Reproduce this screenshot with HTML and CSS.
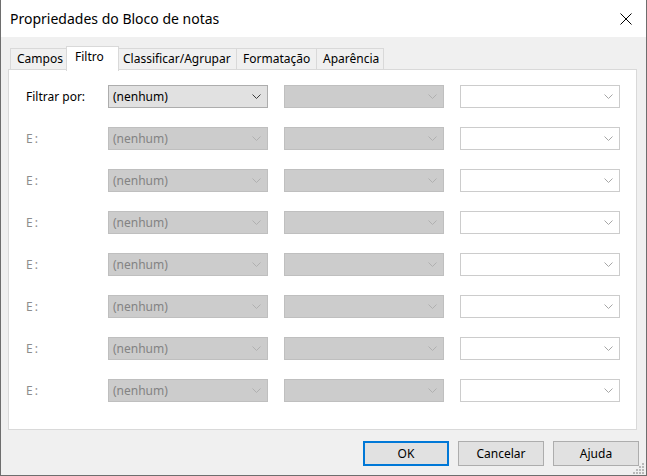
FILE: index.html
```html
<!DOCTYPE html>
<html lang="pt">
<head>
<meta charset="utf-8">
<title>Propriedades do Bloco de notas</title>
<link rel="stylesheet" href="styles.css">
</head>
<body>
<div class="window">
  <div class="titlebar">
    <span class="title">Propriedades do Bloco de notas</span>
    <span class="close">
      <svg width="12" height="12" viewBox="0 0 12 12"><path d="M0.5 0.5 L11.5 11.5 M11.5 0.5 L0.5 11.5" stroke="#000" stroke-width="1" fill="none"/></svg>
    </span>
  </div>
  <div class="client">
    <div class="tabs">
      <div class="tab tab-campos">Campos</div>
      <div class="tab selected tab-filtro">Filtro</div>
      <div class="tab tab-classificar">Classificar/Agrupar</div>
      <div class="tab tab-formatacao">Formatação</div>
      <div class="tab last tab-aparencia">Aparência</div>
    </div>
    <div class="panel">
      <div class="row">
        <span class="label">Filtrar por:</span>
        <div class="combo active"><span class="val">(nenhum)</span><svg class="chev" width="9" height="5" viewBox="0 0 9 5"><path d="M0.5 0.5 L4.5 4.5 L8.5 0.5" stroke="#3c3c3c" fill="none"/></svg></div>
        <div class="combo disabled"><span class="val"></span><svg class="chev" width="9" height="5" viewBox="0 0 9 5"><path d="M0.5 0.5 L4.5 4.5 L8.5 0.5" stroke="#b0b0b0" fill="none"/></svg></div>
        <div class="combo empty"><span class="val"></span><svg class="chev" width="9" height="5" viewBox="0 0 9 5"><path d="M0.5 0.5 L4.5 4.5 L8.5 0.5" stroke="#a6a6a6" fill="none"/></svg></div>
      </div>
      <div class="row">
        <span class="label dim">E:</span>
        <div class="combo disabled"><span class="val">(nenhum)</span><svg class="chev" width="9" height="5" viewBox="0 0 9 5"><path d="M0.5 0.5 L4.5 4.5 L8.5 0.5" stroke="#b0b0b0" fill="none"/></svg></div>
        <div class="combo disabled"><span class="val"></span><svg class="chev" width="9" height="5" viewBox="0 0 9 5"><path d="M0.5 0.5 L4.5 4.5 L8.5 0.5" stroke="#b0b0b0" fill="none"/></svg></div>
        <div class="combo empty"><span class="val"></span><svg class="chev" width="9" height="5" viewBox="0 0 9 5"><path d="M0.5 0.5 L4.5 4.5 L8.5 0.5" stroke="#a6a6a6" fill="none"/></svg></div>
      </div>
      <div class="row">
        <span class="label dim">E:</span>
        <div class="combo disabled"><span class="val">(nenhum)</span><svg class="chev" width="9" height="5" viewBox="0 0 9 5"><path d="M0.5 0.5 L4.5 4.5 L8.5 0.5" stroke="#b0b0b0" fill="none"/></svg></div>
        <div class="combo disabled"><span class="val"></span><svg class="chev" width="9" height="5" viewBox="0 0 9 5"><path d="M0.5 0.5 L4.5 4.5 L8.5 0.5" stroke="#b0b0b0" fill="none"/></svg></div>
        <div class="combo empty"><span class="val"></span><svg class="chev" width="9" height="5" viewBox="0 0 9 5"><path d="M0.5 0.5 L4.5 4.5 L8.5 0.5" stroke="#a6a6a6" fill="none"/></svg></div>
      </div>
      <div class="row">
        <span class="label dim">E:</span>
        <div class="combo disabled"><span class="val">(nenhum)</span><svg class="chev" width="9" height="5" viewBox="0 0 9 5"><path d="M0.5 0.5 L4.5 4.5 L8.5 0.5" stroke="#b0b0b0" fill="none"/></svg></div>
        <div class="combo disabled"><span class="val"></span><svg class="chev" width="9" height="5" viewBox="0 0 9 5"><path d="M0.5 0.5 L4.5 4.5 L8.5 0.5" stroke="#b0b0b0" fill="none"/></svg></div>
        <div class="combo empty"><span class="val"></span><svg class="chev" width="9" height="5" viewBox="0 0 9 5"><path d="M0.5 0.5 L4.5 4.5 L8.5 0.5" stroke="#a6a6a6" fill="none"/></svg></div>
      </div>
      <div class="row">
        <span class="label dim">E:</span>
        <div class="combo disabled"><span class="val">(nenhum)</span><svg class="chev" width="9" height="5" viewBox="0 0 9 5"><path d="M0.5 0.5 L4.5 4.5 L8.5 0.5" stroke="#b0b0b0" fill="none"/></svg></div>
        <div class="combo disabled"><span class="val"></span><svg class="chev" width="9" height="5" viewBox="0 0 9 5"><path d="M0.5 0.5 L4.5 4.5 L8.5 0.5" stroke="#b0b0b0" fill="none"/></svg></div>
        <div class="combo empty"><span class="val"></span><svg class="chev" width="9" height="5" viewBox="0 0 9 5"><path d="M0.5 0.5 L4.5 4.5 L8.5 0.5" stroke="#a6a6a6" fill="none"/></svg></div>
      </div>
      <div class="row">
        <span class="label dim">E:</span>
        <div class="combo disabled"><span class="val">(nenhum)</span><svg class="chev" width="9" height="5" viewBox="0 0 9 5"><path d="M0.5 0.5 L4.5 4.5 L8.5 0.5" stroke="#b0b0b0" fill="none"/></svg></div>
        <div class="combo disabled"><span class="val"></span><svg class="chev" width="9" height="5" viewBox="0 0 9 5"><path d="M0.5 0.5 L4.5 4.5 L8.5 0.5" stroke="#b0b0b0" fill="none"/></svg></div>
        <div class="combo empty"><span class="val"></span><svg class="chev" width="9" height="5" viewBox="0 0 9 5"><path d="M0.5 0.5 L4.5 4.5 L8.5 0.5" stroke="#a6a6a6" fill="none"/></svg></div>
      </div>
      <div class="row">
        <span class="label dim">E:</span>
        <div class="combo disabled"><span class="val">(nenhum)</span><svg class="chev" width="9" height="5" viewBox="0 0 9 5"><path d="M0.5 0.5 L4.5 4.5 L8.5 0.5" stroke="#b0b0b0" fill="none"/></svg></div>
        <div class="combo disabled"><span class="val"></span><svg class="chev" width="9" height="5" viewBox="0 0 9 5"><path d="M0.5 0.5 L4.5 4.5 L8.5 0.5" stroke="#b0b0b0" fill="none"/></svg></div>
        <div class="combo empty"><span class="val"></span><svg class="chev" width="9" height="5" viewBox="0 0 9 5"><path d="M0.5 0.5 L4.5 4.5 L8.5 0.5" stroke="#a6a6a6" fill="none"/></svg></div>
      </div>
      <div class="row">
        <span class="label dim">E:</span>
        <div class="combo disabled"><span class="val">(nenhum)</span><svg class="chev" width="9" height="5" viewBox="0 0 9 5"><path d="M0.5 0.5 L4.5 4.5 L8.5 0.5" stroke="#b0b0b0" fill="none"/></svg></div>
        <div class="combo disabled"><span class="val"></span><svg class="chev" width="9" height="5" viewBox="0 0 9 5"><path d="M0.5 0.5 L4.5 4.5 L8.5 0.5" stroke="#b0b0b0" fill="none"/></svg></div>
        <div class="combo empty"><span class="val"></span><svg class="chev" width="9" height="5" viewBox="0 0 9 5"><path d="M0.5 0.5 L4.5 4.5 L8.5 0.5" stroke="#a6a6a6" fill="none"/></svg></div>
      </div>
    </div>
    <div class="buttons">
      <div class="btn default">OK</div>
      <div class="btn">Cancelar</div>
      <div class="btn">Ajuda</div>
    </div>
    <div class="grip">
      <svg width="12" height="12" viewBox="0 0 12 12" fill="#b9b9b9">
        <rect x="9" y="1" width="2" height="2"/>
        <rect x="6" y="4" width="2" height="2"/><rect x="9" y="4" width="2" height="2"/>
        <rect x="3" y="7" width="2" height="2"/><rect x="6" y="7" width="2" height="2"/><rect x="9" y="7" width="2" height="2"/>
        <rect x="0" y="10" width="2" height="2"/><rect x="3" y="10" width="2" height="2"/><rect x="6" y="10" width="2" height="2"/><rect x="9" y="10" width="2" height="2"/>
      </svg>
    </div>
  </div>
</div>
</body>
</html>
```
FILE: styles.css
```css
* { box-sizing: border-box; }
html, body { margin: 0; padding: 0; }
body {
  width: 647px;
  height: 476px;
  overflow: hidden;
  font-family: "Segoe UI", "Noto Sans", "Open Sans", sans-serif;
  font-size: 12px;
  color: #000;
  background: #fff;
}
.window {
  width: 647px;
  height: 476px;
  border: 1px solid #6e6e6e;
  border-top: none;
  display: flex;
  flex-direction: column;
}
.titlebar {
  height: 37px;
  background: #fff;
  display: flex;
  align-items: center;
  padding-left: 9px;
  padding-right: 14px;
  justify-content: space-between;
}
.title {
  font-size: 14px;
  line-height: 20px;
  margin-top: 1px;
}
.close { display: flex; margin-top: 1px; }
.client {
  flex: 1;
  background: #f0f0f0;
  position: relative;
  padding: 9px 7px 0 7px;
  display: flex;
  flex-direction: column;
}
.tabs {
  display: flex;
  align-items: flex-end;
  height: 24px;
  padding-left: 2px;
  position: relative;
  z-index: 1;
  margin-bottom: -1px;
}
.tab {
  height: 21px;
  margin-bottom: 1px;
  line-height: 20px;
  padding: 0 0 0 6px;
  border: 1px solid #d9d9d9;
  border-right: none;
  border-bottom: none;
  background: #f0f0f0;
  white-space: nowrap;
}
.tab.last { border-right: 1px solid #d9d9d9; }
.tab.selected {
  height: 25px;
  margin-bottom: -1px;
  background: #fff;
  border-right: 1px solid #d9d9d9;
  line-height: 19px;
  padding-left: 8px;
}
.tab.selected + .tab { border-left: none; }
.tab-campos { width: 56px; }
.tab-filtro { width: 53px; }
.tab-classificar { width: 117px; padding-left: 4px; }
.tab-formatacao { width: 80px; }
.tab-aparencia { width: 68px; }
.panel {
  width: 629px;
  height: 361px;
  background: #fff;
  border: 1px solid #d9d9d9;
  padding: 15px 0 0 17px;
  display: flex;
  flex-direction: column;
  gap: 19px;
}
.row {
  display: flex;
  align-items: center;
  height: 23px;
  gap: 16px;
}
.label {
  width: 66px;
  line-height: 23px;
  white-space: nowrap;
}
.label.dim { color: #8d8d8d; letter-spacing: 2px; }
.combo {
  width: 160px;
  height: 23px;
  border: 1px solid;
  display: flex;
  align-items: center;
  justify-content: space-between;
  padding: 0 6px 0 4px;
}
.combo .val { line-height: 20px; }
.combo.active { background: #e1e1e1; border-color: #adadad; }
.combo.disabled { background: #cccccc; border-color: #bfbfbf; color: #838383; }
.combo.empty { background: #fff; border-color: #cccccc; }
.chev { display: block; }
.buttons {
  display: flex;
  justify-content: flex-end;
  gap: 9px;
  margin-top: 11px;
}
.btn {
  width: 86px;
  height: 25px;
  background: #e1e1e1;
  border: 1px solid #adadad;
  display: flex;
  align-items: center;
  justify-content: center;
}
.btn.default { border: 2px solid #0078d7; }
.grip {
  position: absolute;
  right: 1px;
  bottom: 1px;
  display: flex;
}
```
